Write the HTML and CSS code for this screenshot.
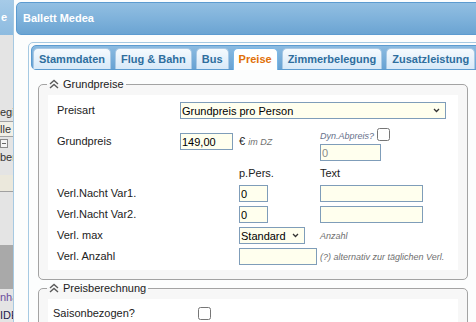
FILE: index.html
```html
<!DOCTYPE html>
<html lang="de">
<head>
  <meta charset="UTF-8">
  <meta name="viewport" content="width=device-width, initial-scale=1.0">
  <title>Ballett Medea - Preise</title>
  <link rel="stylesheet" href="styles.css">
</head>
<body>
  <div class="page">
    <aside class="side">
      <div class="side-head">e</div>
      <div class="side-text side-first">egi</div>
      <div class="side-box">lle</div>
      <div class="side-icon">
        <svg width="9" height="10" viewBox="0 0 9 10"><rect x="0.5" y="0.5" width="7" height="8" fill="#f4f4f4" stroke="#8a8a8a"/><path d="M2 4.5 H6" stroke="#666"/></svg>
      </div>
      <div class="side-text">ber</div>
      <div class="side-row"></div>
      <div class="side-dark"></div>
      <div class="side-text side-link">nha</div>
      <div class="side-text side-code">IDE</div>
    </aside>

    <div class="dialog">
      <div class="dialog-title">Ballett Medea</div>
      <div class="dialog-content">
        <div class="tabs">
          <ul class="tab-nav">
            <li class="tab">Stammdaten</li>
            <li class="tab">Flug &amp; Bahn</li>
            <li class="tab">Bus</li>
            <li class="tab active">Preise</li>
            <li class="tab">Zimmerbelegung</li>
            <li class="tab">Zusatzleistung</li>
          </ul>
          <div class="tab-panel">
            <fieldset class="group">
              <legend><svg class="legend-icon" width="10" height="10" viewBox="0 0 10 10"><path d="M1 5 L5 1.5 L9 5 M1 9 L5 5.5 L9 9" fill="none" stroke="#5a5a5a" stroke-width="1.4"/></svg>Grundpreise</legend>
              <div class="group-body">
                <div class="row">
                  <span class="label">Preisart</span>
                  <span class="select select-wide">
                    <select class="field">
                      <option>Grundpreis pro Person</option>
                    </select>
                    <svg class="select-arrow" width="7" height="5" viewBox="0 0 7 5"><path d="M1 1 L3.5 3.5 L6 1" fill="none" stroke="#333" stroke-width="1.3"/></svg>
                  </span>
                </div>
                <div class="row row-price">
                  <span class="label">Grundpreis</span>
                  <input class="field w-price" type="text" value="149,00">
                  <span class="label">€ <em class="hint">im DZ</em></span>
                  <div class="dyn">
                    <div class="dyn-top"><em class="hint">Dyn.Abpreis?</em><input type="checkbox" class="check"></div>
                    <input class="field w-dyn muted" type="text" value="0">
                  </div>
                </div>
                <div class="row row-head">
                  <span></span>
                  <span></span>
                  <span>p.Pers.</span>
                  <span>Text</span>
                </div>
                <div class="row row-line">
                  <span class="label">Verl.Nacht Var1.</span>
                  <span></span>
                  <span class="cell"><input class="field w-short" type="text" value="0"></span>
                  <span class="cell"><input class="field w-text" type="text"></span>
                </div>
                <div class="row row-line">
                  <span class="label">Verl.Nacht Var2.</span>
                  <span></span>
                  <span class="cell"><input class="field w-short" type="text" value="0"></span>
                  <span class="cell"><input class="field w-text" type="text"></span>
                </div>
                <div class="row row-line">
                  <span class="label">Verl. max</span>
                  <span></span>
                  <span class="cell">
                    <span class="select w-standard">
                      <select class="field">
                        <option>Standard</option>
                      </select>
                      <svg class="select-arrow" width="7" height="5" viewBox="0 0 7 5"><path d="M1 1 L3.5 3.5 L6 1" fill="none" stroke="#333" stroke-width="1.3"/></svg>
                    </span>
                  </span>
                  <em class="hint">Anzahl</em>
                </div>
                <div class="row row-line">
                  <span class="label">Verl. Anzahl</span>
                  <span></span>
                  <span class="cell"><input class="field w-count" type="text"></span>
                  <em class="hint">(?) alternativ zur täglichen Verl.</em>
                </div>
              </div>
            </fieldset>

            <fieldset class="group group-calc">
              <legend><svg class="legend-icon" width="10" height="10" viewBox="0 0 10 10"><path d="M1 5 L5 1.5 L9 5 M1 9 L5 5.5 L9 9" fill="none" stroke="#5a5a5a" stroke-width="1.4"/></svg>Preisberechnung</legend>
              <div class="group-body calc-body">
                <div class="calc-row">
                  <span>Saisonbezogen?</span>
                  <input type="checkbox" class="check">
                </div>
              </div>
            </fieldset>
          </div>
        </div>
      </div>
    </div>
  </div>
</body>
</html>
```

FILE: styles.css
```css
html, body {
  margin: 0;
  height: 100%;
}
body {
  font-family: "Liberation Sans", Arial, sans-serif;
  font-size: 11px;
  color: #222;
  background: #fff;
  overflow: hidden;
}
.page {
  display: flex;
  height: 322px;
}

/* page behind the dialog */
.side {
  flex: 0 0 13px;
  display: flex;
  flex-direction: column;
  background: #e4e4e4;
  overflow: hidden;
}
.side-head {
  height: 35px;
  line-height: 35px;
  background: linear-gradient(#a6cbe8, #8dbbe0);
  color: #fff;
  font-weight: bold;
  padding-left: 1px;
}
.side-text {
  line-height: 13px;
  white-space: nowrap;
  color: #333;
}
.side-first {
  margin-top: 71px;
}
.side-box {
  margin-top: 2px;
  height: 14px;
  line-height: 14px;
  border-top: 1px solid #a2a2a2;
  border-bottom: 1px solid #a2a2a2;
  background: #f1efe6;
  color: #333;
  white-space: nowrap;
}
.side-icon {
  height: 12px;
  padding-top: 2px;
}
.side-row {
  margin-top: 11px;
  height: 16px;
  background: #ebe8dc;
  border-bottom: 1px solid #a0a0a0;
}
.side-dark {
  margin-top: 53px;
  height: 45px;
  background: #a9a9a9;
}
.side-link {
  margin-top: 2px;
  color: #6a4f9c;
}
.side-code {
  margin-top: 5px;
  color: #1c1c4c;
}

/* dialog */
.dialog {
  flex: 0 0 490px;
  border-left: 1px solid #a6c9e2;
  padding: 2px 0 0 2px;
  background: #fcfdfd;
}
.dialog-title {
  height: 31px;
  line-height: 31px;
  padding-left: 6px;
  border: 1px solid #5c9bd0;
  border-radius: 5px;
  background: linear-gradient(#92bfe2, #7fb2db 50%, #6ba4d2);
  color: #fff;
  font-weight: bold;
}
.dialog-content {
  padding: 7px 0 0 12px;
}

/* tabs */
.tabs {
  width: 470px;
  box-sizing: border-box;
  border: 1px solid #a6c9e2;
  border-radius: 5px;
  padding: 2px;
  background: #fcfdfd;
}
.tab-nav {
  display: flex;
  margin: 0;
  padding: 2px 2px 0 1px;
  list-style: none;
  border: 1px solid #5c9bd0;
  border-radius: 5px;
  background: linear-gradient(#8bbbe1, #68a2d3);
}
.tab {
  flex-shrink: 0;
  white-space: nowrap;
  margin-right: 4px;
  padding: 0 5px;
  line-height: 20px;
  border: 1px solid #a9c9e5;
  border-bottom: 0;
  border-radius: 5px 5px 0 0;
  background: linear-gradient(#f5fafe, #d8e9f8);
  color: #2e6e9e;
  font-weight: bold;
}
.tab.active {
  background: #fff;
  border-color: #79b7e7;
  color: #e17009;
  padding-bottom: 1px;
  margin-bottom: -1px;
}
.tab-panel {
  padding: 7px 0 0 7px;
}

/* fieldsets */
.group {
  width: 430px;
  box-sizing: border-box;
  margin: 0;
  padding: 4px 0 9px;
  border: 1px solid #a3a3a3;
  border-radius: 5px;
  background: #f7f7f7;
  min-width: 0;
}
.group legend {
  margin-left: 8px;
  padding: 0 2px;
  line-height: 14px;
  color: #222;
}
.legend-icon {
  vertical-align: -1px;
  margin-right: 4px;
}
.group-body {
  margin: 0 9px;
  padding: 7px 9px 5px;
  background: #fff;
}
.group-calc {
  margin-top: 1px;
}

/* form rows */
.row {
  display: grid;
  grid-template-columns: 123px 59px 81px 1fr;
  align-items: center;
}
.label {
  line-height: 17px;
  white-space: nowrap;
}
.row-price {
  margin-top: 9px;
  align-items: start;
}
.row-price > .label,
.row-price > .field {
  margin-top: 5px;
}
.row-head {
  margin-top: 6px;
  line-height: 13px;
}
.row-line {
  margin-top: 4px;
}
.row-head + .row-line {
  margin-top: 5px;
}
.cell {
  display: flex;
}
.hint {
  font-size: 9px;
  font-style: italic;
  color: #6f6f6f;
  white-space: nowrap;
}
.dyn-top {
  display: flex;
  align-items: center;
  height: 13px;
}
.dyn-top .hint {
  color: #66708a;
  padding-top: 3px;
}
.dyn-top .check {
  margin-left: 3px;
}
.dyn .field {
  margin-top: 3px;
}

.field {
  box-sizing: border-box;
  height: 17px;
  margin: 0;
  padding: 0 1px;
  border: 1px solid #7f9db9;
  background: #ffffee;
  font-family: "Liberation Sans", Arial, sans-serif;
  font-size: 11px;
  color: #000;
  border-radius: 0;
}
.muted {
  color: #8a8a8a;
}

/* select with small chevron */
.select {
  position: relative;
  display: block;
  height: 17px;
}
.select select {
  appearance: none;
  -webkit-appearance: none;
  width: 100%;
  padding: 0 14px 0 1px;
  outline: none;
}
.select-arrow {
  position: absolute;
  right: 6px;
  top: 6px;
  pointer-events: none;
}
.select-wide {
  grid-column: 2 / span 3;
  width: 266px;
}
.w-price { width: 53px; }
.w-dyn { width: 61px; }
.w-short { width: 29px; }
.w-text { width: 103px; }
.w-standard { width: 66px; }
.w-count { width: 78px; }

.check {
  width: 13px;
  height: 13px;
  margin: 0;
}

.calc-body {
  padding: 8px 5px 8px;
}
.calc-row {
  display: grid;
  grid-template-columns: 145px auto;
  align-items: center;
  justify-items: start;
  line-height: 13px;
}
```
